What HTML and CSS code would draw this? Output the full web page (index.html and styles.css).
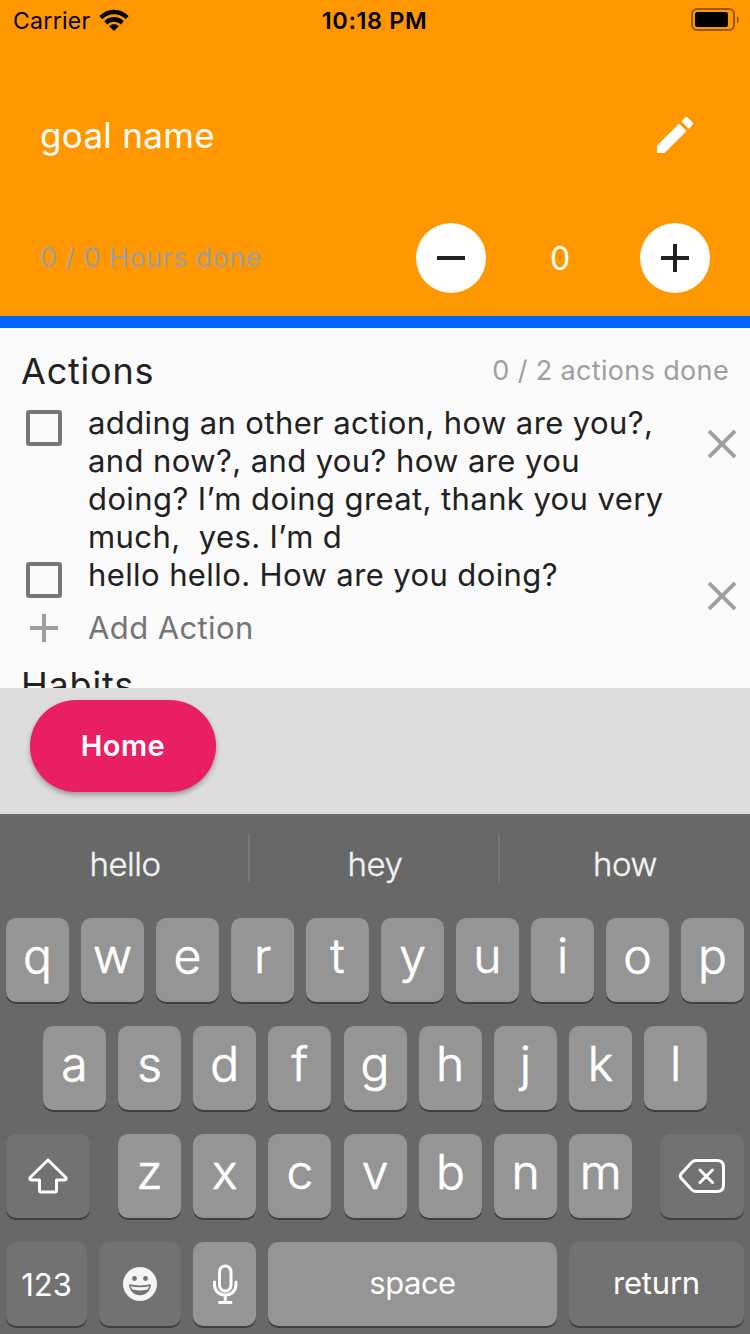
FILE: index.html
```html
<!DOCTYPE html>
<html lang="en">
<head>
<meta charset="utf-8">
<title>Goal</title>
<link rel="stylesheet" href="styles.css">
</head>
<body>
<div class="screen">
  <header class="header">
    <div class="status">
      <div class="status-left">
        <span class="carrier">Carrier</span>
        <svg class="wifi" width="30" height="22" viewBox="0 0 30 22">
          <path d="M0.3 7.1C8.300-1.500 21.700-1.500 29.700 7.100L26.700 10.200C20.300 3.500 9.700 3.500 3.300 10.200Z"/>
          <path d="M5.200 12.300C10.600 6.700 19.400 6.700 24.800 12.300L21.700 15.400C18 11.700 12 11.700 8.300 15.400Z"/>
          <path d="M10.200 17.300C12.900 14.700 17.100 14.700 19.800 17.300L15 22Z"/>
        </svg>
      </div>
      <span class="time">10:18 PM</span>
      <svg class="battery" width="49" height="24" viewBox="0 0 49 24">
        <rect x="1" y="1" width="42" height="21" rx="5" fill="none" stroke="#000" stroke-opacity=".4" stroke-width="2"/>
        <rect x="4" y="4" width="33" height="15" rx="2.500"/>
        <path d="M46 8v7.500c2.400-1.400 2.400-6.100 0-7.500z" fill-opacity=".45"/>
      </svg>
    </div>
    <div class="title-row">
      <h1 class="goal">goal name</h1>
      <svg class="pencil" width="48" height="48" viewBox="0 0 24 24"><path d="M3 17.250V21h3.750L17.810 9.940l-3.750-3.750L3 17.250zM20.710 7.040c.39-.39.39-1.020 0-1.410l-2.340-2.340c-.39-.39-1.020-.39-1.410 0l-1.830 1.830 3.750 3.750 1.830-1.830z"/></svg>
    </div>
    <div class="hours-row">
      <span class="hours">0 / 0 Hours done</span>
      <div class="stepper">
        <button class="round"><svg width="28" height="28" viewBox="0 0 28 28"><path d="M0 12h28v4H0z"/></svg></button>
        <span class="count">0</span>
        <button class="round"><svg width="28" height="28" viewBox="0 0 28 28"><path d="M12 0h4v12h12v4H16v12h-4V16H0v-4h12z"/></svg></button>
      </div>
    </div>
  </header>
  <main class="content">
    <div class="section-head">
      <h2 class="section-title">Actions</h2>
      <span class="summary">0 / 2 actions done</span>
    </div>
    <div class="action">
      <span class="checkbox"></span>
      <p class="action-text">adding an other action, how are you?,<br>and now?, and you? how are you<br>doing? I’m doing great, thank you very<br>much,&nbsp; yes. I’m d</p>
      <svg class="remove" width="28" height="28" viewBox="0 0 28 28"><path d="M1 1l26 26M27 1L1 27"/></svg>
    </div>
    <div class="action short">
      <span class="checkbox"></span>
      <p class="action-text">hello hello. How are you doing?</p>
      <svg class="remove" width="28" height="28" viewBox="0 0 28 28"><path d="M1 1l26 26M27 1L1 27"/></svg>
    </div>
    <div class="add">
      <svg class="add-icon" width="28" height="28" viewBox="0 0 28 28"><path d="M12 0h4v12h12v4H16v12h-4V16H0v-4h12z"/></svg>
      <span class="add-label">Add Action</span>
    </div>
    <h2 class="section-title habits">Habits</h2>
  </main>
  <div class="bottom-bar"><button class="home">Home</button></div>
  <div class="keyboard">
    <div class="suggestions"><span>hello</span><span>hey</span><span>how</span></div>
    <div class="row">
      <span class="key">q</span><span class="key">w</span><span class="key">e</span><span class="key">r</span><span class="key">t</span><span class="key">y</span><span class="key">u</span><span class="key">i</span><span class="key">o</span><span class="key">p</span>
    </div>
    <div class="row middle">
      <span class="key">a</span><span class="key">s</span><span class="key">d</span><span class="key">f</span><span class="key">g</span><span class="key">h</span><span class="key">j</span><span class="key">k</span><span class="key">l</span>
    </div>
    <div class="row">
      <span class="key dark wide">
        <svg class="line-icon" width="42" height="38" viewBox="0 0 42 38"><path d="M21 3L3.200 20.500Q2 23 4.500 23H12.500V33Q12.500 35 14.500 35H27.500Q29.500 35 29.500 33V23H37.500Q40 23 38.800 20.500Z"/></svg>
      </span>
      <div class="row letters">
        <span class="key">z</span><span class="key">x</span><span class="key">c</span><span class="key">v</span><span class="key">b</span><span class="key">n</span><span class="key">m</span>
      </div>
      <span class="key dark wide">
        <svg class="line-icon" width="48" height="38" viewBox="0 0 48 38"><path d="M18 3.500H39Q45.500 3.500 45.500 10V28Q45.500 34.500 39 34.500H18Q15.500 34.500 13.500 32.500L3 21Q1.500 19 3 17L13.500 5.500Q15.500 3.500 18 3.500ZM22 13L34.500 25.500M34.500 13L22 25.500"/></svg>
      </span>
    </div>
    <div class="row last">
      <span class="key dark label numbers">123</span>
      <span class="key dark">
        <svg width="34" height="34" viewBox="0 0 34 34">
          <circle cx="17" cy="17" r="17" fill="#f4f4f4"/>
          <circle cx="11.500" cy="11.500" r="2.400" fill="#727272"/><circle cx="22.500" cy="11.500" r="2.400" fill="#727272"/>
          <path d="M6 17.300Q17 19.500 28 17.300C27.500 24 23 28.200 17 28.200S6.500 24 6 17.300Z" fill="#727272"/>
          <path d="M7.800 19.200Q17 21.200 26.200 19.200Q25.600 22 24.500 22.500Q17 24.300 9.500 22.500Q8.400 22 7.800 19.200Z" fill="#f4f4f4"/>
        </svg>
      </span>
      <span class="key">
        <svg class="line-icon mic" width="26" height="40" viewBox="0 0 26 40"><rect x="7.500" y="2" width="11.500" height="25" rx="5.750"/><path d="M2.500 18V20.500C2.500 27 7 31 13.250 31S24 27 24 20.500V18M13.250 31V38M7.500 38.500H19"/></svg>
      </span>
      <span class="key label space">space</span>
      <span class="key dark label">return</span>
    </div>
  </div>
</div>
</body>
</html>
```
FILE: styles.css
```css
* { box-sizing: border-box; }
body { margin: 0; font-family: Inter, "Liberation Sans", sans-serif; }
h1, h2, p { margin: 0; font-weight: 400; }
button { border: 0; padding: 0; font-family: inherit; }
svg { display: block; flex: none; }
.screen { width: 750px; height: 1334px; overflow: hidden; display: flex; flex-direction: column; background: #fafafa; }

.header { height: 328px; flex: none; background: #ff9800; border-bottom: 12px solid #0066ff; }
.status { height: 40px; display: grid; grid-template-columns: 1fr auto 1fr; align-items: center; padding: 0 10px 0 13px; font-size: 23px; }
.status-left { display: flex; align-items: center; gap: 8px; }
.carrier { letter-spacing: 0.3px; padding-top: 1px; }
.time { font-size: 23.5px; font-weight: 600; letter-spacing: 0.6px; padding: 1px 4px 0 0; }
.battery { justify-self: end; }
.title-row { display: flex; align-items: center; justify-content: space-between; height: 190px; padding: 0 51px 0 40px; }
.goal { font-size: 35px; color: #fff; letter-spacing: 0.3px; }
.pencil { fill: #fff; }
.hours-row { display: flex; align-items: center; justify-content: space-between; height: 56px; padding: 0 40px; }
.hours { font-size: 27px; color: #9e9e9e; letter-spacing: 0.4px; padding-bottom: 1px; }
.stepper { display: flex; align-items: center; justify-content: space-between; width: 294px; }
.round { width: 70px; height: 70px; border-radius: 50%; background: #fff; display: flex; align-items: center; justify-content: center; fill: #212121; }
.count { font-size: 32px; color: #fff; padding-right: 6px; }

.content { height: 360px; flex: none; overflow: hidden; color: #212121; }
.section-head { display: flex; justify-content: space-between; align-items: center; height: 76px; padding: 9px 21px 0; }
.section-title { font-size: 36px; line-height: 44px; letter-spacing: 0.8px; }
.summary { font-size: 27px; color: #9e9e9e; letter-spacing: 0.35px; }
.action { display: flex; align-items: flex-start; padding: 0 14px 0 26px; height: 152px; }
.action.short { height: 62px; }
.checkbox { width: 36px; height: 36px; flex: none; border: 4px solid #757575; border-radius: 3px; margin-top: 6px; }
.action-text { flex: 1; margin-left: 26px; font-size: 31px; line-height: 38px; white-space: nowrap; letter-spacing: 0.4px; }
.remove { margin-top: 26px; fill: none; stroke: #9e9e9e; stroke-width: 3.8; }
.add { display: flex; align-items: center; height: 20px; padding-left: 30px; }
.add-icon { fill: #9e9e9e; }
.add-label { margin-left: 30px; font-size: 31px; color: #757575; letter-spacing: 0.4px; padding-bottom: 2px; }
.habits { padding: 25px 21px 0; }

.bottom-bar { height: 126px; flex: none; background: #dcdcdc; padding: 12px 30px; }
.home { display: block; width: 186px; height: 92px; border-radius: 46px; background: #e91e63; color: #fff; font-size: 29px; font-weight: 600; letter-spacing: 0.5px; padding-bottom: 2px; box-shadow: 0 3px 5px rgba(0, 0, 0, .3); }

.keyboard { flex: 1; background: #686868; color: #fff; padding: 0 6px; display: flex; flex-direction: column; gap: 24px; }
.suggestions { height: 80px; display: grid; grid-template-columns: repeat(3, 250px); margin: 0 -6px; padding: 20px 0 12px; font-size: 33px; font-weight: 300; -webkit-text-stroke: 0.4px #f2f2f2; letter-spacing: -0.5px; color: #f2f2f2; text-align: center; }
.suggestions span { line-height: 60px; height: 48px; padding-left: 2px; border-right: 2px solid #777; }
.suggestions span:last-child { padding-left: 0; border-right: 0; }
.row { height: 84px; display: flex; justify-content: space-between; flex: none; }
.middle { margin: 0 37px; }
.letters { width: 514.3px; margin-left: 0.4px; }
.key { width: 63px; height: 84px; flex: none; border-radius: 10px; background: #959595; box-shadow: 0 2px 0 #3f3f3f; display: flex; align-items: center; justify-content: center; font-size: 48px; font-weight: 300; -webkit-text-stroke: 0.7px #fff; line-height: 76px; padding-bottom: 8px; }
.key.dark { background: #727272; padding-bottom: 0; }
.key.wide { width: 84px; }
.line-icon { fill: none; stroke: #fff; stroke-width: 3; stroke-linejoin: round; stroke-linecap: round; }
.mic { margin-top: 8px; }
.last { display: grid; grid-template-columns: 81px 82px 63px 289px 175px; gap: 12px; }
.last .key { width: auto; }
.key.label { font-size: 31px; font-weight: 400; -webkit-text-stroke: 0; letter-spacing: -0.2px; padding-bottom: 2px; }
.key.space { letter-spacing: -0.5px; }
.key.numbers { padding: 2px 0 0; letter-spacing: 0; }
```
